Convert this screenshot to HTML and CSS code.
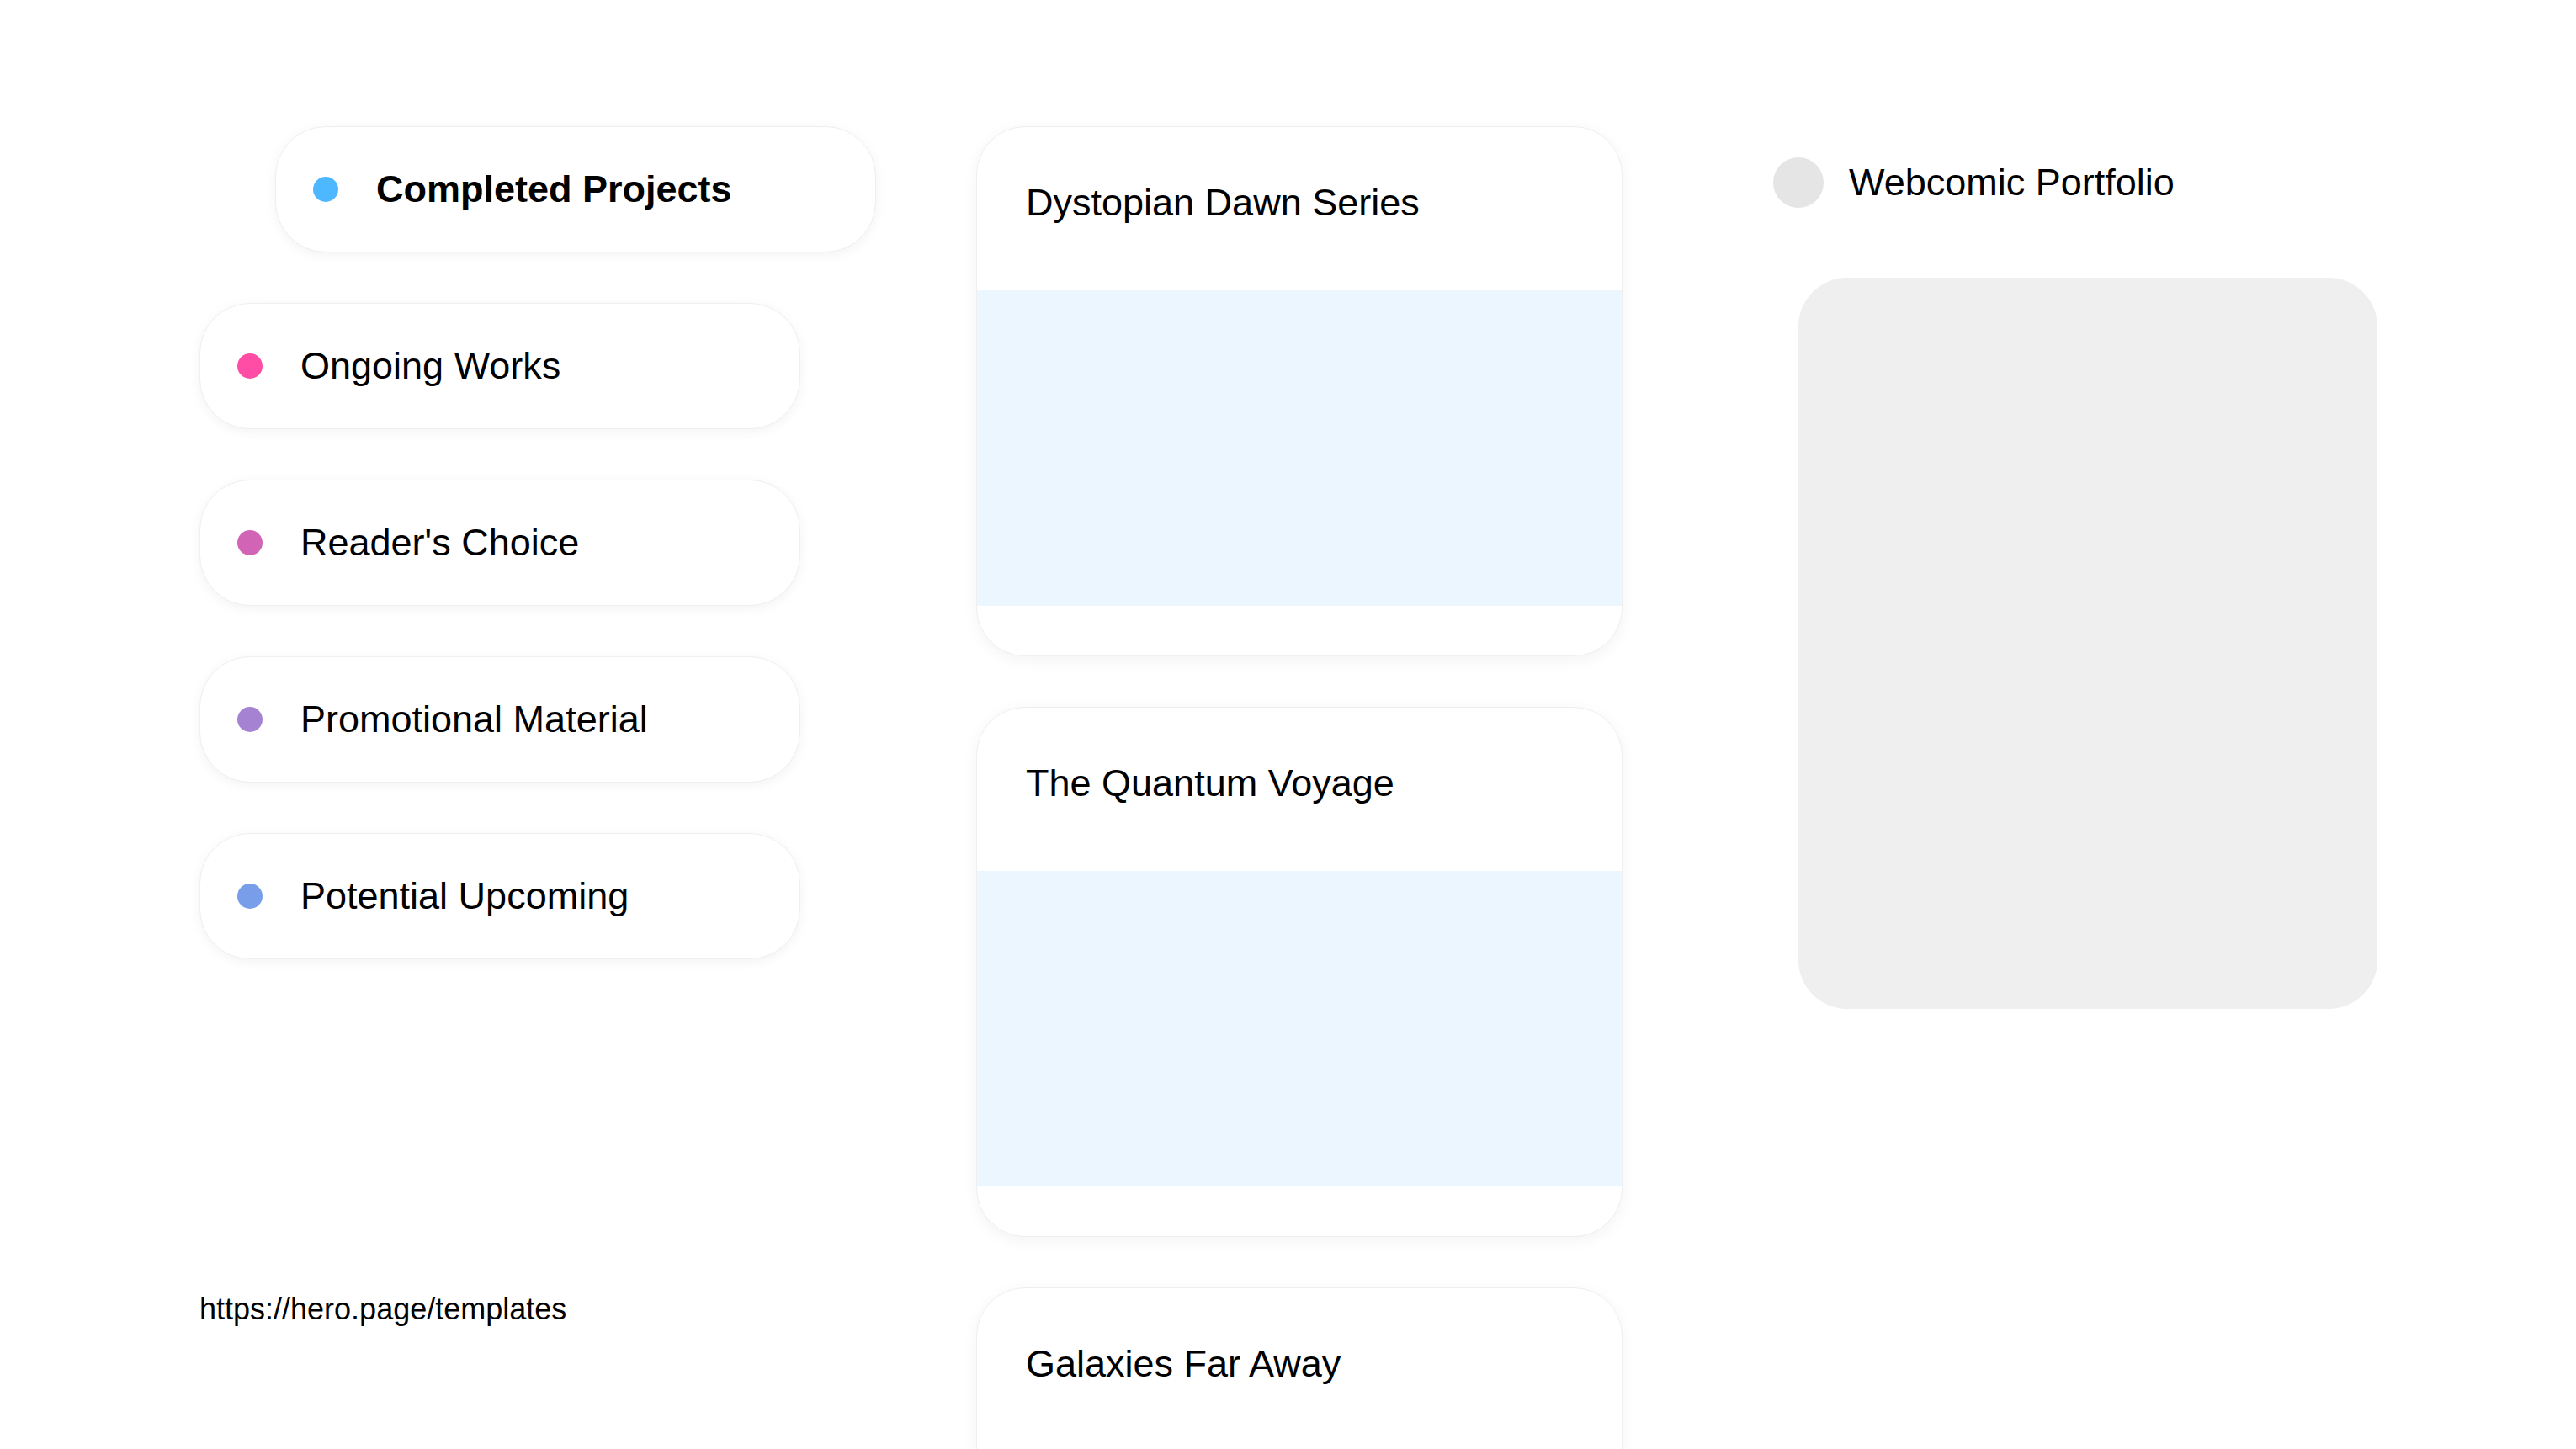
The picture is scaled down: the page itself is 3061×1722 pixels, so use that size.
FILE: index.html
```html
<!DOCTYPE html>
<html lang="en">
<head>
<meta charset="utf-8">
<title>Webcomic Portfolio</title>
<link rel="stylesheet" href="styles.css">
</head>
<body>
<main class="layout">
  <section class="nav-col">
    <ul class="pill-list">
      <li class="pill pill-active"><span class="dot dot-blue"></span><span class="pill-label">Completed Projects</span></li>
      <li class="pill"><span class="dot dot-pink"></span><span class="pill-label">Ongoing Works</span></li>
      <li class="pill"><span class="dot dot-magenta"></span><span class="pill-label">Reader's Choice</span></li>
      <li class="pill"><span class="dot dot-purple"></span><span class="pill-label">Promotional Material</span></li>
      <li class="pill"><span class="dot dot-periwinkle"></span><span class="pill-label">Potential Upcoming</span></li>
    </ul>
    <p class="url">https://hero.page/templates</p>
  </section>

  <section class="cards-col">
    <article class="card">
      <h3 class="card-title">Dystopian Dawn Series</h3>
      <div class="card-media"></div>
      <div class="card-foot"></div>
    </article>
    <article class="card">
      <h3 class="card-title">The Quantum Voyage</h3>
      <div class="card-media"></div>
      <div class="card-foot"></div>
    </article>
    <article class="card">
      <h3 class="card-title">Galaxies Far Away</h3>
      <div class="card-media"></div>
      <div class="card-foot"></div>
    </article>
  </section>

  <section class="side-col">
    <div class="side-head">
      <span class="avatar"></span>
      <span class="side-title">Webcomic Portfolio</span>
    </div>
    <div class="side-box"></div>
  </section>
</main>
</body>
</html>
```

FILE: styles.css
```css
html, body {
  margin: 0;
  padding: 0;
  background: #ffffff;
  overflow: hidden;
}

body {
  font-family: "Liberation Sans", Arial, sans-serif;
  color: #000000;
}

.layout {
  display: grid;
  grid-template-columns: 924px 947px 718px;
  padding: 150px 236px 0 236px;
  align-items: start;
}

/* left navigation column */
.nav-col {
  display: flex;
  flex-direction: column;
}

.pill-list {
  list-style: none;
  margin: 0;
  padding: 0 0 0 1px;
  display: flex;
  flex-direction: column;
  gap: 60px;
}

.pill {
  box-sizing: border-box;
  width: 714px;
  height: 150px;
  display: flex;
  align-items: center;
  gap: 45px;
  padding-left: 44px;
  background: #ffffff;
  border: 1px solid #efefef;
  border-radius: 60px;
  box-shadow: 0 3px 14px rgba(0, 0, 0, 0.05);
}

.pill-active {
  margin-left: 90px;
}

.pill-label {
  font-size: 45px;
  line-height: 52px;
  white-space: nowrap;
}

.pill-active .pill-label {
  font-weight: bold;
}

.dot {
  width: 30px;
  height: 30px;
  border-radius: 50%;
  flex: none;
}

.dot-blue { background: #4db8ff; }
.dot-pink { background: #ff4da6; }
.dot-magenta { background: #d264b6; }
.dot-purple { background: #a683d2; }
.dot-periwinkle { background: #789ee9; }

.url {
  margin: 395px 0 0 1px;
  font-size: 36px;
  line-height: 41px;
}

/* middle cards column */
.cards-col {
  display: flex;
  flex-direction: column;
  gap: 60px;
}

.card {
  box-sizing: border-box;
  width: 768px;
  height: 630px;
  background: #ffffff;
  border: 1px solid #efefef;
  border-radius: 58px;
  box-shadow: 0 4px 18px rgba(0, 0, 0, 0.05);
  overflow: hidden;
  display: flex;
  flex-direction: column;
}

.card-title {
  margin: 0;
  padding: 64px 40px 78px 58px;
  font-size: 45px;
  line-height: 52px;
  font-weight: normal;
}

.card-media {
  height: 375px;
  background: #ecf6fe;
}

.card-foot {
  flex: 1;
}

/* right column */
.side-col {
  padding-top: 37px;
  display: flex;
  flex-direction: column;
}

.side-head {
  display: flex;
  align-items: center;
  gap: 30px;
  height: 60px;
}

.avatar {
  width: 60px;
  height: 60px;
  border-radius: 50%;
  background: #e5e5e5;
  flex: none;
}

.side-title {
  font-size: 45px;
  line-height: 52px;
}

.side-box {
  margin: 83px 0 0 30px;
  height: 869px;
  background: #efefef;
  border-radius: 58px;
}
```
